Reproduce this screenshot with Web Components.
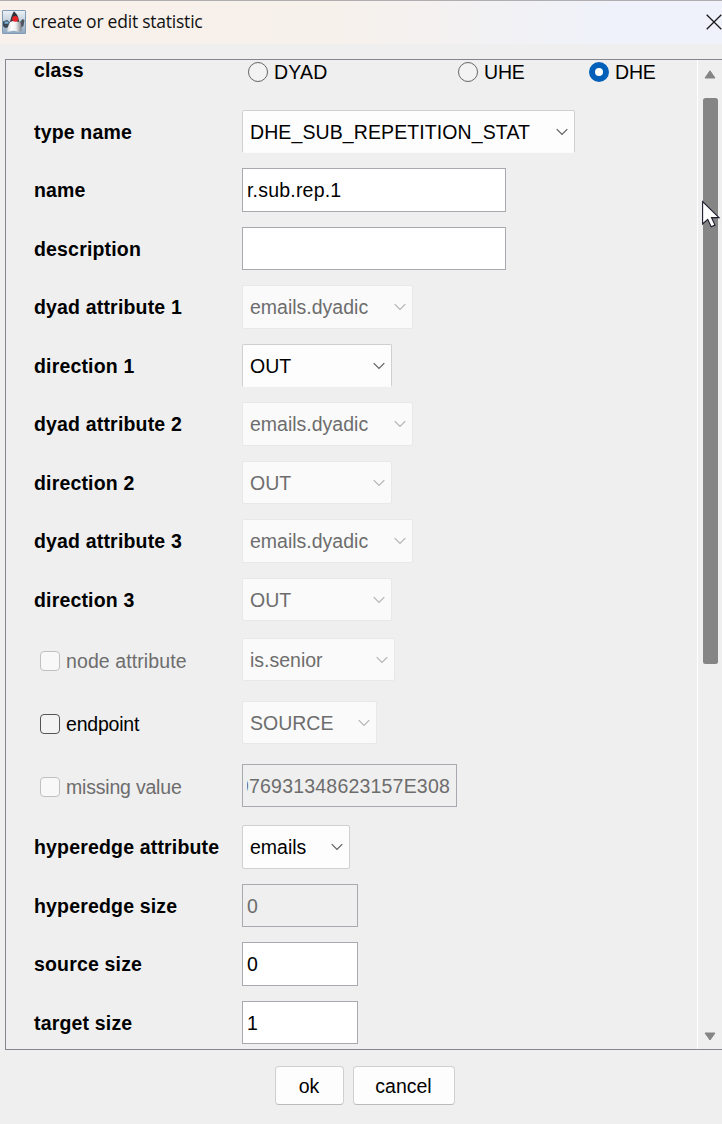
<!DOCTYPE html>
<html lang="en"><head><meta charset="utf-8"><title>create or edit statistic</title>
<style>html,body{margin:0;height:100%;overflow:hidden;background:#efefef}</style></head>
<body>
<stat-dialog></stat-dialog>
<script>
const define = (name, html, setup) => customElements.define(name, class extends HTMLElement {
  constructor() { super(); this.attachShadow({mode:'open'}).innerHTML = html; }
  connectedCallback() {
    for (const a of ['w','h','gap']) if (this.hasAttribute(a)) this.style.setProperty('--' + a, this.getAttribute(a) + 'px');
    if (setup) setup(this);
  }
});

define('title-bar', `<style>
:host{display:flex;align-items:center;box-sizing:border-box;height:44px;border-top:1px solid #b0aeb1;padding:0 0 2px 2px;background:linear-gradient(90deg,#f8f0eb,#f7f1eb 45%,#eff2fa 85%)}
.t{font:17.5px "Open Sans","Noto Sans",sans-serif;color:#111;margin-left:6px;flex:1;white-space:nowrap;letter-spacing:-.23px;position:relative;top:-1px}
.x{width:16px;height:16px;flex:none}
</style>
<svg width="24" height="24" viewBox="0 0 24 24">
<defs><linearGradient id="g" x2="0" y2="1"><stop stop-color="#eef2f6"/><stop offset="1" stop-color="#8fa8c0"/></linearGradient>
<linearGradient id="b"><stop stop-color="#d8dadd"/><stop offset=".3" stop-color="#fff"/><stop offset=".6" stop-color="#eee"/><stop offset="1" stop-color="#7d8289"/></linearGradient></defs>
<rect x=".5" y=".5" width="23" height="23" rx=".5" fill="url(#g)" stroke="#7f9bb5"/>
<path d="M1 11.5l4-1.5 4 3-1 4-5 1-2-2z" fill="#3b4650"/><path d="M2.5 11.5h4v2.2h-4z" fill="#7fb4dd"/>
<path d="M18 12l2.5-3L22.5 10l-1 6-3 2z" fill="#4d565f"/>
<path d="M8 12C6 16 5 19 5.5 22c3-.6 5-1.5 8-1 2 1 4 1 6 0 .5-4-.5-9-2.500-11z" fill="url(#b)"/>
<path d="M12 1.300C10 4 9 8 8 12l4-1.500 5 1.500C17 7 14.500 3.500 12 1.300z" fill="#30343a"/>
<ellipse cx="13.200" cy="8.800" rx="3" ry="2.900" fill="#e82226"/></svg>
<span class="t"><slot></slot></span>
<svg class="x" viewBox="0 0 16 16"><path d="M.7 .7l14.6 14.6M15.3 .7L.7 15.3" stroke="#191919" stroke-width="1.3"/></svg>`);

define('form-row', `<style>
:host{display:grid;grid-template-columns:208px 1fr;align-items:center;height:var(--h);margin-bottom:var(--gap);font:19.5px/22px "Liberation Sans",Arial,sans-serif}
b{display:block;letter-spacing:.17px;white-space:nowrap;padding-top:.9px}
:host([checks]) .l{padding:2px 0 0 6px}
:host([top]){align-items:start;line-height:20px}
:host([top]) b{padding:0}
</style><div class="l"><slot name="label"></slot><b></b></div><slot></slot>`,
 el => {
   const b = el.shadowRoot.querySelector('b');
   if (el.hasAttribute('label')) b.textContent = el.getAttribute('label'); else b.remove();
 });

define('combo-box', `<style>
:host{display:flex;align-items:center;justify-content:space-between;box-sizing:border-box;width:var(--w);height:100%;padding:0 6px 0 7px;background:#fdfdfd;border:1px solid #d0d0d0;border-radius:2px;white-space:nowrap;color:#000}
:host([cut]){border-bottom-color:#fafafa}
:host([disabled]){background:#fafafa;border-color:#e8e8e8;color:#6d6d6d}
span{padding-top:.9px}
svg{flex:none;opacity:.85}:host([disabled]) svg{opacity:.38}
</style><span><slot></slot></span><svg width="12" height="8" viewBox="0 0 12 8"><path d="M.7 1.2L6 6.5l5.3-5.3" fill="none" stroke="#444" stroke-width="1.2"/></svg>`);

define('text-field', `<style>
:host{display:flex;align-items:center;box-sizing:border-box;width:var(--w);height:100%;padding:0 4px;background:#fff;border:1px solid #a8a9ae;white-space:nowrap;color:#000}
:host([disabled]){background:#efefef;color:#6d6d6d}
span{display:flex;width:100%;overflow:hidden;padding-top:.9px}
:host([end]){padding-right:6px}
:host([end]) span{justify-content:flex-end}
</style><span><slot></slot></span>`);

define('check-box', `<style>
:host{display:flex;align-items:center;gap:6px;color:#000}
i{box-sizing:border-box;width:20px;height:20px;border:1px solid #555;border-radius:4px;background:#f3f3f3}
:host([disabled]){color:#6d6d6d}:host([disabled]) i{border-color:#c0c0c0;background:#f8f8f8}
</style><i></i><span><slot></slot></span>`);

define('radio-option', `<style>
:host{display:flex;align-items:center;gap:6px}
i{box-sizing:border-box;width:20px;height:20px;border:1px solid #666;border-radius:50%;background:#f3f3f3}
:host([checked]) i{border:6px solid #005fb8;background:#fff}
</style><i></i><span><slot></slot></span>`);

define('scroll-bar', `<style>
:host{display:flex;flex-direction:column;align-items:center;box-sizing:border-box;width:25px;border-left:1px solid #fff;padding:10px 0 8px 1px}
.th{width:15px;height:566px;border-radius:2.5px;background:#858585;margin:19px 0 auto}
svg{display:block;margin-right:1px}
</style><svg width="12" height="9"><path d="M6 .8L11 8H1z" fill="#858585" stroke="#858585" stroke-linejoin="round"/></svg><div class="th"></div><svg width="12" height="9"><path d="M6 8L11 1H1z" fill="#858585" stroke="#858585" stroke-linejoin="round"/></svg>`);

define('push-button', `<style>
:host{display:flex;align-items:center;justify-content:center;box-sizing:border-box;width:var(--w);height:39px;padding:1px 1px 0 0;background:#fdfdfd;border:1px solid #d0d0d0;border-bottom-color:#bababa;border-radius:4px;font:19.5px/22px "Liberation Sans",Arial,sans-serif}
</style><slot></slot>`);

define('stat-dialog', `<style>
:host{display:flex;flex-direction:column;width:722px;height:1124px;background:#efefef;color:#000}
.panel{display:flex;box-sizing:border-box;height:991px;margin:15px 0 0 5px;border:1px solid #85858f;border-right:0;overflow:hidden;flex:none}
.form{flex:1;padding-left:28px}
.radios{display:grid;grid-template-columns:210px 131px 1fr;padding:2px 0 0 6px}
.bar{display:flex;gap:9px;padding:16px 0 0 275px}
.cursor{position:absolute;left:702px;top:200px}
.tight{letter-spacing:-.2px}.wide{letter-spacing:.2px}.wide1{letter-spacing:.1px}
</style>
<title-bar>create or edit statistic</title-bar>
<div class="panel"><div class="form">
<form-row top label="class" h="22" gap="28"><div class="radios"><radio-option class="wide">DYAD</radio-option><radio-option class="tight">UHE</radio-option><radio-option class="tight" checked>DHE</radio-option></div></form-row>
<form-row label="type name" h="43" gap="15"><combo-box class="wide1" cut w="333">DHE_SUB_REPETITION_STAT</combo-box></form-row>
<form-row label="name" h="44" gap="15"><text-field class="wide" w="264">r.sub.rep.1</text-field></form-row>
<form-row label="description" h="43" gap="15"><text-field w="264"></text-field></form-row>
<form-row label="dyad attribute 1" h="44" gap="15"><combo-box disabled w="171">emails.dyadic</combo-box></form-row>
<form-row label="direction 1" h="43" gap="15"><combo-box cut w="150">OUT</combo-box></form-row>
<form-row label="dyad attribute 2" h="44" gap="15"><combo-box disabled w="171">emails.dyadic</combo-box></form-row>
<form-row label="direction 2" h="43" gap="15"><combo-box disabled w="150">OUT</combo-box></form-row>
<form-row label="dyad attribute 3" h="44" gap="15"><combo-box disabled w="171">emails.dyadic</combo-box></form-row>
<form-row label="direction 3" h="43" gap="17"><combo-box disabled w="150">OUT</combo-box></form-row>
<form-row checks h="43" gap="20"><check-box class="wide1" slot="label" disabled>node attribute</check-box><combo-box disabled w="153">is.senior</combo-box></form-row>
<form-row checks h="43" gap="20"><check-box class="tight" slot="label">endpoint</check-box><combo-box disabled w="135">SOURCE</combo-box></form-row>
<form-row checks h="43" gap="18"><check-box class="tight" slot="label" disabled>missing value</check-box><text-field class="wide" disabled end w="215">-1.7976931348623157E308</text-field></form-row>
<form-row label="hyperedge attribute" h="44" gap="15"><combo-box w="108">emails</combo-box></form-row>
<form-row label="hyperedge size" h="43" gap="15"><text-field disabled w="116">0</text-field></form-row>
<form-row label="source size" h="44" gap="15"><text-field w="116">0</text-field></form-row>
<form-row label="target size" h="43" gap="0"><text-field w="116">1</text-field></form-row>
</div><scroll-bar></scroll-bar></div>
<div class="bar"><push-button w="69">ok</push-button><push-button w="102">cancel</push-button></div>
<svg class="cursor" width="20" height="30" viewBox="0 0 20 30"><path d="M.6 1.500V24l5.100-4.700 3.500 7.400 3.800-1.600-3.500-7.500H17z" fill="#fff" stroke="#1b1b2b" stroke-width="1.1"/></svg>`);
</script>
</body></html>
